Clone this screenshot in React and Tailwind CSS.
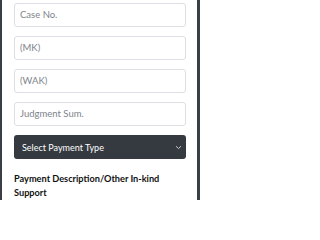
import React from "react";

const font = { fontFamily: 'Lato, "Noto Sans", sans-serif' };

function Field({ placeholder }) {
  return (
    <div className="h-[24px] w-full rounded-[3px] border border-[#dcdfe3] bg-white flex items-center px-[5px]">
      <span className="text-[9.5px] text-[#7d848b] leading-none">{placeholder}</span>
    </div>
  );
}

export default function App() {
  return (
    <div className="w-[200px] h-[200px] flex bg-white overflow-hidden" style={font}>
      <div className="w-[2px] h-full bg-[#3a3f45]" />
      <div className="flex-1 pl-[12px] pr-[11px] pt-[3px] flex flex-col">
        <div className="flex flex-col gap-[9px]">
          <Field placeholder="Case No." />
          <Field placeholder="(MK)" />
          <Field placeholder="(WAK)" />
          <Field placeholder="Judgment Sum." />
          <div className="h-[24px] w-full rounded-[3px] bg-[#343a40] flex items-center justify-between pl-[8px] pr-[4px]">
            <span className="text-[9px] text-white leading-none">Select Payment Type</span>
            <svg width="7" height="5" viewBox="0 0 7 5" fill="none">
              <path d="M1 1.2 L3.5 3.6 L6 1.2" stroke="#c9ccd0" strokeWidth="1" />
            </svg>
          </div>
        </div>
        <div className="mt-[13px] text-[9.2px] font-bold text-[#111] leading-[14px]">
          Payment Description/Other In-kind Support
        </div>
      </div>
      <div className="w-[3px] h-full bg-[#3a3f45]" />
    </div>
  );
}
